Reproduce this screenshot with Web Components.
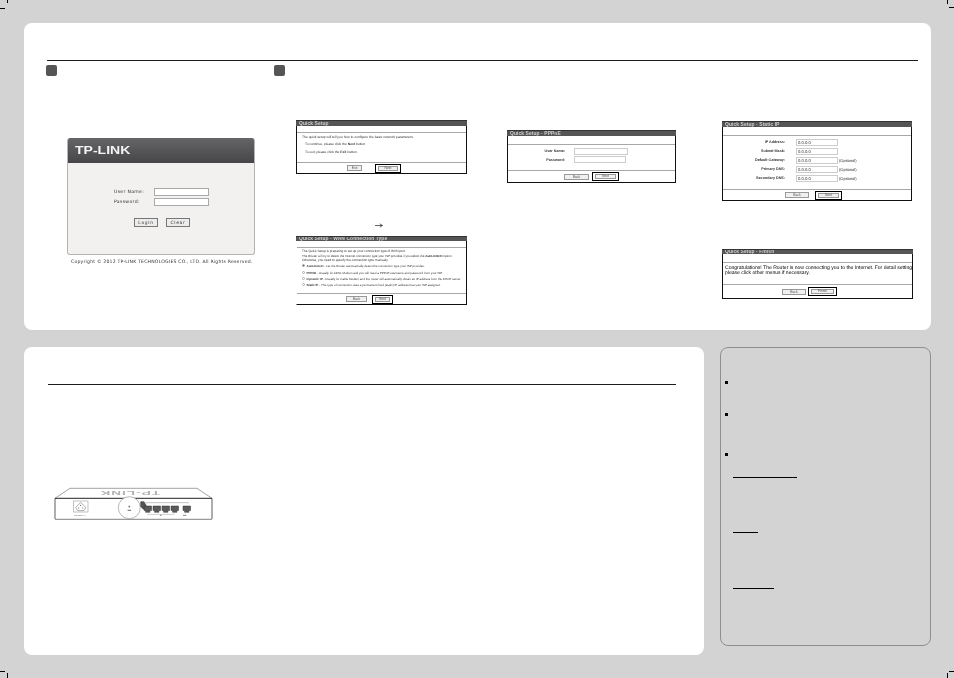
<!DOCTYPE html>
<html>
<head>
<meta charset="utf-8">
<title>Quick Installation Guide</title>
<style>
html, body { margin: 0; padding: 0; background: #d3d3d3; }
body { width: 954px; height: 678px; overflow: hidden; font-family: "Liberation Sans", sans-serif; }
</style>
</head>
<body>
<guide-sheet>
  <crop-marks></crop-marks>
  <guide-card style="width:907px;height:307px;--rule-left:23px;--rule-right:13px">
    <setup-flow>
      <login-panel slot="login"></login-panel>
      <quick-dialog slot="first" heading="Quick Setup" back="Exit" next="Next"
        style="--w:171px;--band:6px;--body:29px;--foot:10px;--pad-left:50px;--btn-back:15px;--btn-next:26px;--btn-gap:13px">
        <dialog-line style="--top:2.5px;--left:5px;--size:3.35px">The quick setup will tell you how to configure the basic network parameters.</dialog-line>
        <dialog-line style="--top:4.6px;--left:8px;--size:3.35px">To continue, please click the <b>Next</b> button.</dialog-line>
        <dialog-line style="--top:3.8px;--left:8px;--size:3.35px">To exit, please click the <b>Exit</b> button.</dialog-line>
      </quick-dialog>
      <flow-arrow slot="first"></flow-arrow>
      <quick-dialog slot="first" heading="Quick Setup - WAN Connection Type" back="Back" next="Next" open-sides
        style="--w:171px;--band:6px;--body:45px;--foot:10px;--pad-left:49px;--btn-back:21px;--btn-next:21px;--btn-gap:5px;--head-h:5px">
        <dialog-line style="--top:2.4px;--left:5px;--size:3.2px">The Quick Setup is preparing to set up your connection type of WAN port.</dialog-line>
        <dialog-line style="--top:1.75px;--left:5px;--size:3.05px">The Router will try to detect the Internet connection type your ISP provides if you select the <b>Auto-Detect</b> option.</dialog-line>
        <dialog-line style="--top:.25px;--left:5px;--size:3.2px">Otherwise, you need to specify the connection type manually.</dialog-line>
        <dialog-radio checked style="--top:1.85px"><b>Auto-Detect</b> - Let the Router automatically detect the connection type your ISP provides.</dialog-radio>
        <dialog-radio style="--top:3px"><b>PPPoE</b> - Usually for ADSL Modem and you will need a PPPoE username and password from your ISP.</dialog-radio>
        <dialog-radio style="--top:2px"><b>Dynamic IP</b> - Usually for Cable Modem and the router will automatically obtain an IP address from the DHCP server.</dialog-radio>
        <dialog-radio style="--top:2px"><b>Static IP</b> - This type of connection uses a permanent fixed (static) IP address that your ISP assigned.</dialog-radio>
      </quick-dialog>
      <quick-dialog slot="second" heading="Quick Setup - PPPoE" back="Back" next="Next"
        style="--w:169px;--band:8px;--body:25px;--foot:11px;--pad-left:56px;--btn-back:25px;--btn-next:27px;--btn-gap:3px">
        <dialog-field label="User Name:" style="--top:2.5px;--label:57px;--gap:9px;--input:54px"></dialog-field>
        <dialog-field label="Password:" style="--top:1.5px;--label:57px;--gap:9px;--input:52px"></dialog-field>
      </quick-dialog>
      <quick-dialog slot="third" heading="Quick Setup - Static IP" back="Back" next="Next"
        style="--w:190px;--band:8px;--body:53px;--foot:10px;--pad-left:62px;--btn-back:24px;--btn-next:27px;--btn-gap:6px">
        <dialog-field label="IP Address:" value="0.0.0.0" style="--top:2.5px;--label:62px;--gap:11px;--input:42px"></dialog-field>
        <dialog-field label="Subnet Mask:" value="0.0.0.0" style="--top:2px;--label:62px;--gap:11px;--input:42px"></dialog-field>
        <dialog-field label="Default Gateway:" value="0.0.0.0" note="(Optional)" style="--top:2px;--label:62px;--gap:11px;--input:42px"></dialog-field>
        <dialog-field label="Primary DNS:" value="0.0.0.0" note="(Optional)" style="--top:2px;--label:62px;--gap:11px;--input:42px"></dialog-field>
        <dialog-field label="Secondary DNS:" value="0.0.0.0" note="(Optional)" style="--top:2px;--label:62px;--gap:11px;--input:42px"></dialog-field>
      </quick-dialog>
      <quick-dialog slot="third" heading="Quick Setup - Finish" back="Back" next="Finish"
        style="--w:191px;--band:8px;--body:21px;--foot:13px;--pad-left:59px;--btn-back:24px;--btn-next:29px;--btn-gap:2px;--head-h:5px;--gap-top:48px">
        <dialog-line style="--top:3px;--left:2px;--size:5.05px;--tone:#000">Congratulations! The Router is now connecting you to the Internet. For detail settings,</dialog-line>
        <dialog-line style="--left:2px;--top:.4px;--size:5.05px;--tone:#000">please click other menus if necessary.</dialog-line>
      </quick-dialog>
    </setup-flow>
  </guide-card>
  <guide-card style="width:680px;height:308px;--rule-left:24px;--rule-right:28px">
    <router-figure></router-figure>
  </guide-card>
  <side-notes>
    <note-mark style="margin-top:33px"></note-mark>
    <note-mark style="margin-top:29px"></note-mark>
    <note-mark style="margin-top:37px"></note-mark>
    <note-line style="margin-top:21px;width:64px"></note-line>
    <note-line style="margin-top:54px;width:25px"></note-line>
    <note-line style="margin-top:55px;width:41px"></note-line>
  </side-notes>
</guide-sheet>

<script>
class GuideSheet extends HTMLElement {
    constructor() {
        super();
        this.attachShadow({mode: "open"});
    }
    connectedCallback() {
        this.shadowRoot.innerHTML = /* html */`
        <style>
        :host { display: block; }
        .sheet {
            display: grid;
            grid-template-columns: 680px 211px;
            column-gap: 16px;
            row-gap: 17px;
            align-items: start;
            padding: 23px 0 0 24px;
            will-change: transform;
        }
        ::slotted(guide-card:first-of-type) { grid-column: 1 / span 2; }
        </style>
        <div class="sheet"><slot></slot></div>`;
    }
}

class CropMarks extends HTMLElement {
    constructor() {
        super();
        this.attachShadow({mode: "open"});
    }
    connectedCallback() {
        this.shadowRoot.innerHTML = /* html */`
        <style>
        :host { position: fixed; left: 0; top: 0; width: 954px; height: 678px; pointer-events: none; }
        i { position: absolute; background: #000; }
        .h { width: 5px; height: 1px; }
        .v { width: 1px; height: 5px; }
        </style>
        <i class="h" style="left:0;top:8px"></i>
        <i class="v" style="left:7px;top:0;height:3px"></i>
        <i class="h" style="left:949px;top:7px"></i>
        <i class="v" style="left:947px;top:0;height:4px"></i>
        <i class="h" style="left:0;top:671px"></i>
        <i class="v" style="left:7px;top:673px"></i>
        <i class="h" style="left:949px;top:671px"></i>
        <i class="v" style="left:947px;top:673px"></i>`;
    }
}

class GuideCard extends HTMLElement {
    constructor() {
        super();
        this.attachShadow({mode: "open"});
    }
    connectedCallback() {
        this.shadowRoot.innerHTML = /* html */`
        <style>
        :host {
            display: block;
            box-sizing: border-box;
            padding: 37px var(--rule-right) 0 var(--rule-left);
            background: #fff;
            border-radius: 8px;
        }
        .rule { height: 1px; background: #1c1c1c; }
        </style>
        <div class="rule"></div>
        <slot></slot>`;
    }
}

class SetupFlow extends HTMLElement {
    constructor() {
        super();
        this.attachShadow({mode: "open"});
    }
    connectedCallback() {
        this.shadowRoot.innerHTML = /* html */`
        <style>
        :host { display: grid; grid-template-columns: 228px 1fr; padding-top: 4px; }
        .badge { width: 11px; height: 11px; border-radius: 2px; background: #555; margin-left: -1px; }
        .login { margin: 62px 0 0 20px; }
        .steps { display: grid; grid-template-columns: 211px 215px 191px; padding-left: 21px; }
        .first { padding-top: 44px; }
        .second { padding-top: 54px; }
        .third { padding-top: 45px; }
        </style>
        <div>
            <div class="badge"></div>
            <div class="login"><slot name="login"></slot></div>
        </div>
        <div>
            <div class="badge"></div>
            <div class="steps">
                <div class="first"><slot name="first"></slot></div>
                <div class="second"><slot name="second"></slot></div>
                <div class="third"><slot name="third"></slot></div>
            </div>
        </div>`;
    }
}

class LoginPanel extends HTMLElement {
    constructor() {
        super();
        this.attachShadow({mode: "open"});
    }
    connectedCallback() {
        this.shadowRoot.innerHTML = /* html */`
        <style>
        :host { display: block; width: 188px; font-family: "DejaVu Sans", sans-serif; color: #333; }
        .box {
            height: 117px;
            box-sizing: border-box;
            background: #f2f1ef;
            border: 1px solid #b4b4b4;
            border-top: 0;
            border-radius: 3px;
            overflow: hidden;
        }
        .head {
            height: 25px;
            margin: 0 -1px;
            padding: 1px 0 0 8px;
            box-sizing: border-box;
            background: linear-gradient(#656567, #464648);
        }
        .logo {
            display: inline-block;
            font: bold 11.5px/15px "Liberation Sans", sans-serif;
            color: #f4f4f4;
            transform: scaleX(1.22);
            transform-origin: left center;
        }
        .form {
            display: grid;
            grid-template-columns: 40px 55px;
            row-gap: 2px;
            padding: 25px 0 0 46px;
            font-size: 4.6px;
            letter-spacing: .3px;
            line-height: 8px;
        }
        .input { height: 8px; box-sizing: border-box; background: #fff; border: 1px solid #a9a9a9; }
        .buttons { display: flex; gap: 8px; padding: 12px 0 0 66px; }
        .btn {
            width: 24px;
            height: 9px;
            box-sizing: border-box;
            border: 1px solid #777;
            background: #ececec;
            font-size: 4.4px;
            letter-spacing: .7px;
            line-height: 7px;
            text-align: center;
        }
        .copy {
            margin: 3px 0 0 4px;
            width: 190px;
            font-size: 4.6px;
            letter-spacing: .2px;
            line-height: 7px;
            white-space: nowrap;
        }
        </style>
        <div class="box">
            <div class="head"><span class="logo">TP-LINK</span></div>
            <div class="form">
                <span>User Name:</span><div class="input"></div>
                <span>Password:</span><div class="input"></div>
            </div>
            <div class="buttons"><div class="btn">Login</div><div class="btn">Clear</div></div>
        </div>
        <div class="copy">Copyright © 2012 TP-LINK TECHNOLOGIES CO., LTD. All Rights Reserved.</div>`;
    }
}

class QuickDialog extends HTMLElement {
    constructor() {
        super();
        this.attachShadow({mode: "open"});
    }
    connectedCallback() {
        const heading = this.getAttribute("heading");
        const back = this.getAttribute("back");
        const next = this.getAttribute("next");
        this.shadowRoot.innerHTML = /* html */`
        <style>
        :host {
            display: block;
            width: var(--w);
            margin-top: var(--gap-top, 0);
            box-sizing: border-box;
            background: #fff;
            border: solid #111;
            border-width: 0 1px 1px;
            font-family: "Liberation Sans", sans-serif;
        }
        :host([open-sides]) { border-left-color: transparent; }
        .title {
            height: var(--head-h, 6px);
            box-sizing: border-box;
            margin: 0 -1px;
            padding-left: 3px;
            background: #555;
            border-top: 1px solid #333;
            color: #cfcfcf;
            font-size: 4.9px;
            font-weight: bold;
            letter-spacing: .1px;
            line-height: calc(var(--head-h, 6px) - 1px);
            white-space: nowrap;
            overflow: hidden;
        }
        .band { height: var(--band); }
        .line { height: 1px; background: #a8a8a8; }
        .body { height: var(--body); overflow: hidden; }
        .foot {
            height: var(--foot);
            display: flex;
            align-items: center;
            gap: var(--btn-gap);
            padding-left: var(--pad-left);
            box-sizing: border-box;
        }
        .btn {
            height: 6px;
            box-sizing: border-box;
            border: 1px solid #999;
            background: #f0f0f0;
            color: #555;
            font-size: 3.4px;
            line-height: 4px;
            text-align: center;
        }
        .back { width: var(--btn-back); }
        .next { width: var(--btn-next); box-sizing: border-box; padding: 1px 2px; border: 1px solid #000; }
        .next .btn { height: 5px; line-height: 3px; }
        </style>
        <div class="title">${heading}</div>
        <div class="band"></div>
        <div class="line"></div>
        <div class="body"><slot></slot></div>
        <div class="line"></div>
        <div class="foot">
            <div class="btn back">${back}</div>
            <div class="next"><div class="btn">${next}</div></div>
        </div>`;
    }
}

class DialogLine extends HTMLElement {
    constructor() {
        super();
        this.attachShadow({mode: "open"});
    }
    connectedCallback() {
        this.shadowRoot.innerHTML = /* html */`
        <style>
        :host {
            display: block;
            margin: var(--top, 0) 0 0 var(--left, 0);
            color: var(--tone, #333);
            font-size: var(--size, 3.25px);
            line-height: 1;
            white-space: nowrap;
            text-rendering: geometricPrecision;
        }
        </style>
        <slot></slot>`;
    }
}

class DialogRadio extends HTMLElement {
    constructor() {
        super();
        this.attachShadow({mode: "open"});
    }
    connectedCallback() {
        const checked = this.hasAttribute("checked");
        this.shadowRoot.innerHTML = /* html */`
        <style>
        :host {
            display: flex;
            align-items: center;
            gap: 1.5px;
            margin: var(--top, 0) 0 0 5px;
            color: #333;
            font-size: 3px;
            line-height: 4px;
            white-space: nowrap;
            text-rendering: geometricPrecision;
        }
        i {
            flex: none;
            width: 3px;
            height: 3px;
            border-radius: 50%;
            border: 1px solid #aaa;
            box-sizing: border-box;
            background: ${checked ? "#666" : "#fff"};
        }
        </style>
        <i></i><span><slot></slot></span>`;
    }
}

class DialogField extends HTMLElement {
    constructor() {
        super();
        this.attachShadow({mode: "open"});
    }
    connectedCallback() {
        const label = this.getAttribute("label");
        const value = this.getAttribute("value") || "";
        const note = this.getAttribute("note") || "";
        this.shadowRoot.innerHTML = /* html */`
        <style>
        :host {
            display: flex;
            align-items: center;
            gap: var(--gap);
            margin-top: var(--top, 0);
            height: 7px;
            color: #333;
            font-size: 3.7px;
            white-space: nowrap;
            text-rendering: geometricPrecision;
        }
        b { width: var(--label); text-align: right; }
        .input {
            width: var(--input);
            height: 7px;
            box-sizing: border-box;
            padding-left: 1px;
            border: 1px solid #ccc;
            background: #fff;
            font-size: 4.2px;
            line-height: 5px;
        }
        .note { margin-left: calc(1px - var(--gap)); font-size: 4px; }
        </style>
        <b>${label}</b>
        <div class="input">${value}</div>
        <span class="note">${note}</span>`;
    }
}

class FlowArrow extends HTMLElement {
    constructor() {
        super();
        this.attachShadow({mode: "open"});
    }
    connectedCallback() {
        this.shadowRoot.innerHTML = /* html */`
        <style>
        :host { display: block; height: 5px; margin: 49px 0 8px 79px; }
        svg { display: block; }
        </style>
        <svg width="8" height="5" viewBox="0 0 8 5">
            <path d="M0 2.5H7" stroke="#222" stroke-width=".7" fill="none"/>
            <path d="M4.8 .9L7.6 2.5L4.8 4.1" stroke="#222" stroke-width=".7" fill="none"/>
        </svg>`;
    }
}

class RouterFigure extends HTMLElement {
    constructor() {
        super();
        this.attachShadow({mode: "open"});
    }
    getPorts() {
        return [94, 103, 112, 121, 133].map(x =>
            `<path d="M${x} 21h7.5v4.5h-1.6v1.8h-4.3v-1.8H${x}z" fill="#5a5a5a" stroke="#333" stroke-width=".5"/>`
        ).join("");
    }
    connectedCallback() {
        this.shadowRoot.innerHTML = /* html */`
        <style>
        :host { display: block; width: 170px; height: 44px; margin: 100px 0 0 2px; }
        svg { display: block; font-family: "Liberation Sans", sans-serif; }
        </style>
        <svg width="170" height="44" viewBox="0 0 170 44">
            <path d="M5 13.3L20 3.3H147L162 13.3" fill="#fff" stroke="#8a8a8a" stroke-width=".8"/>
            <path d="M5 13.3H162" stroke="#222" stroke-width="1"/>
            <path d="M5 13.3V34M162 13.3V34" stroke="#333" stroke-width=".8"/>
            <path d="M5 34.4H162" stroke="#9a9a9a" stroke-width="1.2"/>
            <text transform="translate(110 6) rotate(180) scale(2.7 1)" font-size="5" font-weight="bold" letter-spacing=".4" fill="#b0b0b0">TP-LINK</text>
            <rect x="23.5" y="16" width="14.5" height="11" fill="#fff" stroke="#aaa" stroke-width=".7"/>
            <path d="M30.7 17.5L36 22.5L34 25.6H27.6L25.6 22.5z" fill="none" stroke="#777" stroke-width=".6"/>
            <circle cx="28.6" cy="23" r=".6" fill="#555"/><circle cx="32.8" cy="23" r=".6" fill="#555"/><circle cx="30.7" cy="20.3" r=".6" fill="#555"/>
            <text x="24" y="31" font-size="2.2" fill="#666">POWER 9V</text>
            <circle cx="79.3" cy="22.7" r="11" fill="#fff" stroke="#888" stroke-width=".6"/>
            <path d="M79.3 20.5v2.2M78.2 21.6h2.2" stroke="#444" stroke-width=".5"/>
            <rect x="77.6" y="24.8" width="3.5" height="1" fill="#666"/>
            <path d="M90.7 16.7H94L96 20V24H93L90.7 21.5z" fill="#555" stroke="#333" stroke-width=".5"/>
            <path d="M96 17.7H139" stroke="#bbb" stroke-width=".9"/>
            ${this.getPorts()}
            <path d="M97 29.4H124.5" stroke="#c4c4c4" stroke-width=".8"/>
            <path d="M110 30.3h1.5M133 30.3h3.4" stroke="#777" stroke-width=".9"/>
        </svg>`;
    }
}

class SideNotes extends HTMLElement {
    constructor() {
        super();
        this.attachShadow({mode: "open"});
    }
    connectedCallback() {
        this.shadowRoot.innerHTML = /* html */`
        <style>
        :host {
            display: block;
            height: 299px;
            box-sizing: border-box;
            padding-left: 4px;
            border: 1px solid #8f8f8f;
            border-radius: 8px;
        }
        </style>
        <slot></slot>`;
    }
}

class NoteMark extends HTMLElement {
    constructor() {
        super();
        this.attachShadow({mode: "open"});
    }
    connectedCallback() {
        this.shadowRoot.innerHTML = `<style>:host { display: block; width: 3px; height: 3px; background: #000; }</style>`;
    }
}

class NoteLine extends HTMLElement {
    constructor() {
        super();
        this.attachShadow({mode: "open"});
    }
    connectedCallback() {
        this.shadowRoot.innerHTML = `<style>:host { display: block; height: 1px; margin-left: 8px; background: #000; }</style>`;
    }
}

customElements.define("guide-sheet", GuideSheet);
customElements.define("crop-marks", CropMarks);
customElements.define("guide-card", GuideCard);
customElements.define("setup-flow", SetupFlow);
customElements.define("login-panel", LoginPanel);
customElements.define("quick-dialog", QuickDialog);
customElements.define("dialog-line", DialogLine);
customElements.define("dialog-radio", DialogRadio);
customElements.define("dialog-field", DialogField);
customElements.define("flow-arrow", FlowArrow);
customElements.define("router-figure", RouterFigure);
customElements.define("side-notes", SideNotes);
customElements.define("note-mark", NoteMark);
customElements.define("note-line", NoteLine);
</script>
</body>
</html>
